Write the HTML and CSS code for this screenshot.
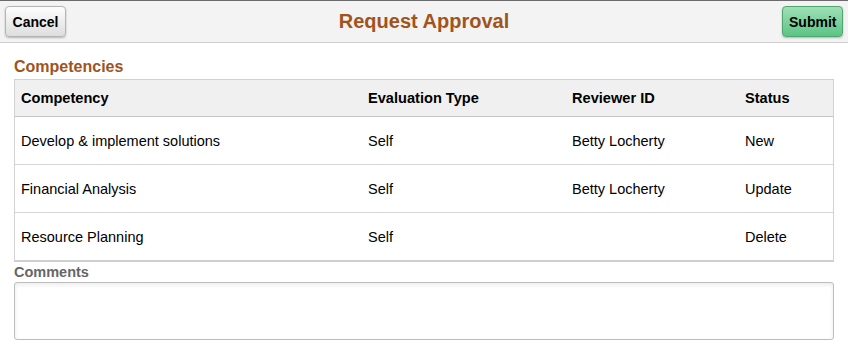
FILE: index.html
```html
<!DOCTYPE html>
<html lang="en">
<head>
  <meta charset="UTF-8" />
  <meta name="viewport" content="width=device-width, initial-scale=1.0"/>
  <title>Request Approval</title>
  <link rel="stylesheet" href="styles.css">
</head>
<body>
  <div class="header">
    <button class="btn btn-cancel">Cancel</button>
    <h1 class="page-title">Request Approval</h1>
    <button class="btn btn-submit">Submit</button>
  </div>

  <div class="content">
    <h2 class="section-title">Competencies</h2>
    <div class="grid">
      <div class="row row-head">
        <div class="cell">Competency</div>
        <div class="cell">Evaluation Type</div>
        <div class="cell">Reviewer ID</div>
        <div class="cell">Status</div>
      </div>
      <div class="row">
        <div class="cell">Develop &amp; implement solutions</div>
        <div class="cell">Self</div>
        <div class="cell">Betty Locherty</div>
        <div class="cell">New</div>
      </div>
      <div class="row">
        <div class="cell">Financial Analysis</div>
        <div class="cell">Self</div>
        <div class="cell">Betty Locherty</div>
        <div class="cell">Update</div>
      </div>
      <div class="row">
        <div class="cell">Resource Planning</div>
        <div class="cell">Self</div>
        <div class="cell"></div>
        <div class="cell">Delete</div>
      </div>
    </div>

    <label class="field-label" for="comments">Comments</label>
    <textarea class="comments" id="comments"></textarea>
  </div>
</body>
</html>
```

FILE: styles.css
```css
body {
  font-family: "Liberation Sans", Arial, sans-serif;
  font-size: 14.5px;
  color: #000;
  margin: 0;
  background: #fff;
}

/* Barra superior */
.header {
  display: flex;
  align-items: center;
  justify-content: space-between;
  height: 41px;
  padding: 0 5px;
  background: #f3f3f3;
  border-top: 1px solid #6b6b6b;
  border-bottom: 1px solid #cfcfcf;
}

.page-title {
  margin: 0;
  font-size: 20px;
  font-weight: bold;
  color: #a0541c;
}

.btn {
  height: 31px;
  padding: 0 6px;
  font-family: inherit;
  font-size: 14px;
  font-weight: bold;
  color: #000;
  border-radius: 4px;
  cursor: pointer;
}

.btn-cancel {
  width: 61px;
  border: 1px solid #b4b4b4;
  background: linear-gradient(#fdfdfd, #dedede);
  box-shadow: 0 1px 2px rgba(0, 0, 0, 0.25);
}

.btn-submit {
  width: 61px;
  border: 1px solid #4fa671;
  background: linear-gradient(#9fe0b5, #5cc485);
  box-shadow: 0 1px 2px rgba(0, 0, 0, 0.25);
}

.content {
  padding: 0 14px;
}

.section-title {
  margin: 15px 0 3px;
  font-size: 16px;
  line-height: 18px;
  font-weight: bold;
  color: #a0541c;
}

/* Tabla de competencias */
.grid {
  border: 1px solid #d2d2d2;
  border-bottom: 2px solid #cfcfcf;
}

.row {
  display: grid;
  grid-template-columns: 347px 204px 173px 1fr;
  height: 47px;
  align-items: center;
  border-top: 1px solid #d6d6d6;
}

.row-head {
  height: 36px;
  border-top: none;
  border-bottom: 1px solid #c4c4c4;
  background: #f0f0f0;
  font-weight: bold;
  font-size: 14.6px;
}

.row-head + .row {
  border-top: none;
}

.cell {
  padding-left: 6px;
}

.field-label {
  display: block;
  margin-top: 2px;
  font-size: 14.5px;
  font-weight: bold;
  color: #666;
  line-height: 16px;
}

.comments {
  display: block;
  box-sizing: border-box;
  width: 100%;
  height: 58px;
  margin-top: 2px;
  border: 1px solid #bdbdbd;
  border-radius: 3px;
  box-shadow: inset 0 2px 4px rgba(0, 0, 0, 0.08);
  resize: none;
}
```
